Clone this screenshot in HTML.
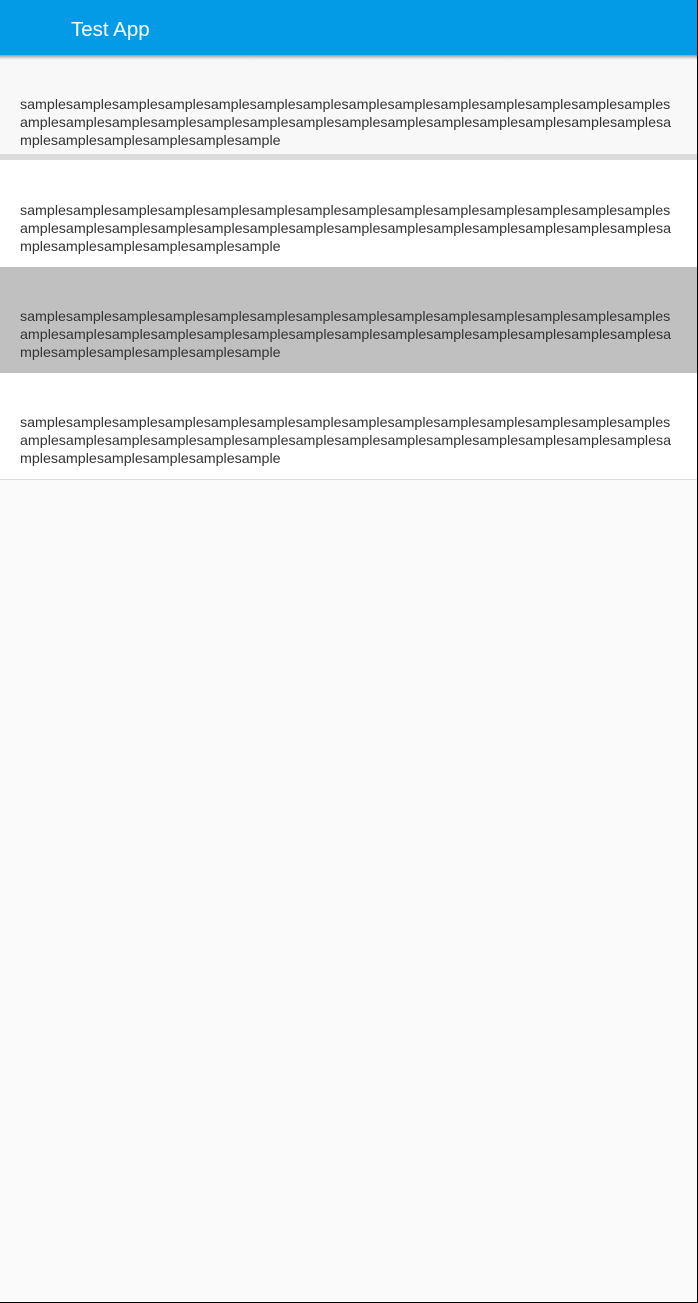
<!DOCTYPE html>
<html><head><meta charset="utf-8"><style>
html,body{margin:0;padding:0;}
body{width:698px;height:1303px;position:relative;background:#fafafa;overflow:hidden;font-family:"Liberation Sans",sans-serif;}
.hdr{position:absolute;left:0;top:0;width:698px;height:55px;background:#039be5;z-index:2;}
.hdr span{position:absolute;left:71px;top:18px;font-size:20.5px;color:#fff;}
.sh{position:absolute;left:0;top:55px;width:698px;height:5px;background:linear-gradient(#999,#ddd 60%,#f8f8f8);z-index:2;}
.it{position:absolute;left:0;width:698px;}
.t{position:absolute;left:20px;font-size:14.25px;line-height:18px;color:#333;white-space:nowrap;}
.bd{position:absolute;right:0;top:0;width:1px;height:1303px;background:#000;z-index:5;}
.bb{position:absolute;left:0;bottom:0;width:698px;height:1px;background:#000;z-index:5;}
</style></head><body>
<div class="hdr"><span>Test App</span></div>
<div class="sh"></div>
<div class="it" style="top:55px;height:99px;background:#f8f8f8"></div>
<div class="it" style="top:154px;height:6px;background:#dcdcdc"></div>
<div class="it" style="top:160px;height:107px;background:#fff"></div>
<div class="it" style="top:267px;height:106px;background:#c0c0c0"></div>
<div class="it" style="top:373px;height:106px;background:#fff;border-bottom:1px solid #dcdcdc"></div>

<div class="t" style="top:96px">samplesamplesamplesamplesamplesamplesamplesamplesamplesamplesamplesamplesamplesamples<br>amplesamplesamplesamplesamplesamplesamplesamplesamplesamplesamplesamplesamplesamplesa<br>mplesamplesamplesamplesamplesample</div>
<div class="t" style="top:202px">samplesamplesamplesamplesamplesamplesamplesamplesamplesamplesamplesamplesamplesamples<br>amplesamplesamplesamplesamplesamplesamplesamplesamplesamplesamplesamplesamplesamplesa<br>mplesamplesamplesamplesamplesample</div>
<div class="t" style="top:308px">samplesamplesamplesamplesamplesamplesamplesamplesamplesamplesamplesamplesamplesamples<br>amplesamplesamplesamplesamplesamplesamplesamplesamplesamplesamplesamplesamplesamplesa<br>mplesamplesamplesamplesamplesample</div>
<div class="t" style="top:414px">samplesamplesamplesamplesamplesamplesamplesamplesamplesamplesamplesamplesamplesamples<br>amplesamplesamplesamplesamplesamplesamplesamplesamplesamplesamplesamplesamplesamplesa<br>mplesamplesamplesamplesamplesample</div>
<div class="bd"></div><div class="bb"></div>
</body></html>
